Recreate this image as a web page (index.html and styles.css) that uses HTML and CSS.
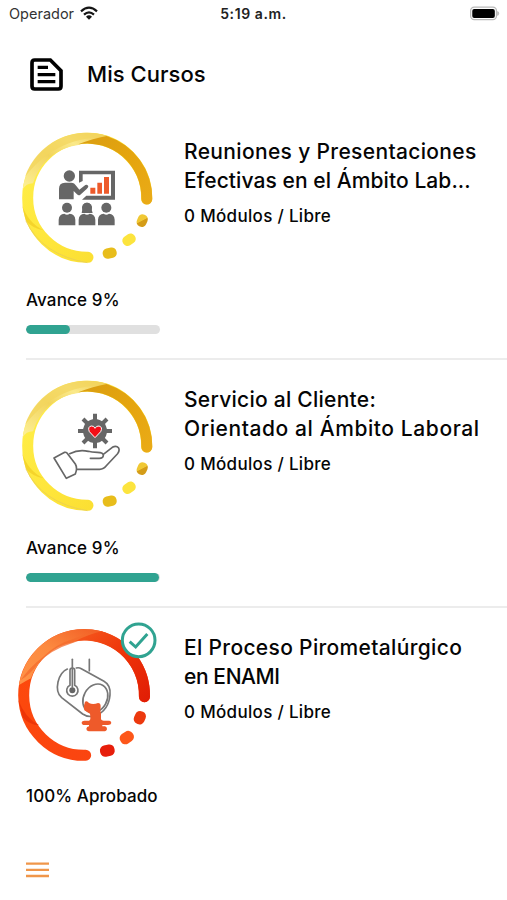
FILE: index.html
```html
<!DOCTYPE html>
<html lang="es">
<head>
<meta charset="utf-8">
<meta name="viewport" content="width=device-width, initial-scale=1">
<title>Mis Cursos</title>
<link rel="stylesheet" href="styles.css">
</head>
<body>
<svg class="defs" width="0" height="0" aria-hidden="true">
  <defs>
    <linearGradient id="gold" x1="0" y1="0" x2="1" y2="1"><stop offset="0" stop-color="#d99d12"/><stop offset=".5" stop-color="#e5a50e"/><stop offset="1" stop-color="#eaab18"/></linearGradient>
    <linearGradient id="pale" x1="0" y1="1" x2="1" y2="0"><stop offset="0" stop-color="#fdf19b"/><stop offset=".45" stop-color="#f2d45c"/><stop offset=".7" stop-color="#fae98a"/><stop offset="1" stop-color="#edc545"/></linearGradient>
    <linearGradient id="sun" x1="0" y1="0" x2="1" y2="1"><stop offset="0" stop-color="#fff04b"/><stop offset=".55" stop-color="#fee53a"/><stop offset="1" stop-color="#f8da2c"/></linearGradient>
    <linearGradient id="red" x1="0" y1="0" x2="1" y2="1"><stop offset="0" stop-color="#f65a1e"/><stop offset=".5" stop-color="#ed3208"/><stop offset="1" stop-color="#e01c05"/></linearGradient>
    <linearGradient id="orange" x1="0" y1="1" x2="1" y2="0"><stop offset="0" stop-color="#ff9347"/><stop offset=".5" stop-color="#fc8a40"/><stop offset="1" stop-color="#f15a22"/></linearGradient>
    <linearGradient id="fire" x1="0" y1="0" x2="1" y2="1"><stop offset="0" stop-color="#fd4a0b"/><stop offset="1" stop-color="#fa4312"/></linearGradient>
    <linearGradient id="dotGold" x1="0" y1="0" x2="1" y2="1"><stop offset=".48" stop-color="#f0c834"/><stop offset=".52" stop-color="#d49c18"/></linearGradient>
    <g id="ring-yellow">
      <path d="M410 237A178.500 178.500 0 1 0 234 412" fill="none" stroke="url(#sun)" stroke-width="33" stroke-linecap="round"/>
      <path d="M38 208A196 196 0 0 1 300 51Q250 60 205 75A162 162 0 0 0 69 190Q48 190 38 208Z" fill="url(#pale)"/>
      <path d="M45 170Q105 92 190 65Q235 50 300 51A196 196 0 0 0 45 170Z" fill="#f3d65f" opacity=".75"/>
      <path d="M205 73Q250 55 290 48A196 196 0 0 1 427 237A16.500 16.500 0 0 1 394 237A162 162 0 0 0 205 73Z" fill="url(#gold)"/>
      <path d="M36 255Q55 310 101 331Q68 325 47 302Z" fill="#f2cd24" opacity=".75"/>
      <path d="M48 303Q95 404 232 428" fill="none" stroke="#e9cf55" stroke-width="2.500"/>
      <rect x="382" y="283" width="30" height="38" rx="14" transform="rotate(24 397 301)" fill="url(#dotGold)"/>
      <rect x="337" y="344" width="41" height="31" rx="14" transform="rotate(-34 357 360)" fill="#fce43e"/>
      <rect x="278" y="384" width="42" height="31" rx="14" transform="rotate(-12 299 399)" fill="#e8bd1b"/>
    </g>
    <g id="attendee"><circle cx="0" cy="0" r="15"/><path d="M-25 53V36Q-24 19-8 18Q0 24 8 18Q24 19 25 36V53Z"/></g>
  </defs>
</svg>

<div class="status">
  <div class="carrier"><span>Operador</span>
    <svg class="wifi" viewBox="0 0 54 42"><path d="M3 16Q27-6 51 16M12 26Q27 12 42 26" fill="none" stroke="#151515" stroke-width="6.500"/><path d="M18 32Q27 24 36 32L27 41Z" fill="#151515"/></svg>
  </div>
  <time>5:19 a.m.</time>
  <svg class="battery" viewBox="0 0 93 44"><rect x="2" y="2" width="80" height="39" rx="11" fill="#fff" stroke="#b9b9b9" stroke-width="4"/><rect x="7" y="8" width="70" height="28" rx="6" fill="#000"/><path d="M86 16q6 5 0 12z" fill="#b9b9b9" stroke="#b9b9b9" stroke-width="3"/></svg>
</div>

<header class="header">
  <svg class="doc" viewBox="0 0 99 99"><path d="M14 6H61L93 38V85Q93 93 85 93H14Q6 93 6 85V14Q6 6 14 6Z" fill="none" stroke="#000" stroke-width="11"/><path d="M23 28H54M23 50H76M23 71H76" stroke="#000" stroke-width="10"/></svg>
  <h1>Mis Cursos</h1>
</header>

<main>
  <article class="course">
    <div class="top">
      <svg class="badge" viewBox="0 0 480 450">
        <use href="#ring-yellow"/>
        <g fill="#666">
          <circle cx="178" cy="168" r="17"/>
          <path d="M147 238V206Q147 188 165 188H184Q193 188 199 198L208 209L226 195Q233 192 235 199Q235 203 230 207L211 224Q206 228 201 223L191 213V238Z"/>
          <path d="M207 188V152H315V239H216L229 227H303V163H218V183Z"/>
          <use href="#attendee" x="171" y="263"/><use href="#attendee" x="231" y="263"/><use href="#attendee" x="289" y="263"/>
          <path d="M215 279Q218 265 218 258Q222 248 231 248Q241 248 245 260Q244 270 248 279Z"/>
        </g>
        <path d="M241 203h15v18h-15zM262 188h14v33h-14zM282 171h15v50h-15z" fill="#ed5a2b"/>
      </svg>
      <div class="info">
        <h2><span class="t1">Reuniones y Presentaciones</span><span class="t2">Efectivas en el Ámbito Lab...</span></h2>
        <p class="meta">0 Módulos / Libre</p>
      </div>
    </div>
    <p class="progress-label">Avance 9%</p>
    <div class="track"><div class="fill" style="width:33%"></div></div>
  </article>

  <article class="course">
    <div class="top">
      <svg class="badge" viewBox="0 0 480 450">
        <use href="#ring-yellow"/>
        <g transform="translate(0 6)">
          <g stroke="#666" stroke-width="12"><path d="M255 131V235M204 183H306M219 147L291 219M219 219L291 147"/></g>
          <circle cx="255" cy="183" r="36" fill="#666"/>
          <path d="M255 203L238 185Q232 170 244 168Q252 167 255 175Q259 167 267 168Q279 171 272 185Z" fill="#f20d16" stroke="#fff" stroke-width="3"/>
          <g fill="#fff" stroke="#666" stroke-width="5" stroke-linejoin="round" stroke-linecap="round">
            <path d="M179 251Q207 237 235 244Q244 247 262 247Q280 247 280 256Q279 265 268 265H241M280 253L307 232Q319 225 326 234Q330 242 322 252L291 285Q281 298 269 298H201" fill="none"/>
            <path d="M132 264L164 247Q168 246 171 249L196 282Q203 294 196 312L169 325Z"/>
          </g>
        </g>
      </svg>
      <div class="info">
        <h2><span class="t3">Servicio al Cliente:</span><span class="t4">Orientado al Ámbito Laboral</span></h2>
        <p class="meta">0 Módulos / Libre</p>
      </div>
    </div>
    <p class="progress-label">Avance 9%</p>
    <div class="track"><div class="fill" style="width:99.5%"></div></div>
  </article>

  <article class="course">
    <div class="top">
      <svg class="badge" viewBox="0 0 480 450">
        <g transform="translate(0 -3)">
          <path d="M403 245A181 181 0 1 0 227 421" fill="none" stroke="url(#fire)" stroke-width="33" stroke-linecap="round"/>
          <path d="M27 210A198 198 0 0 1 290 54Q240 56 190 82A164 164 0 0 0 63 190Q35 205 27 210Z" fill="url(#orange)"/>
          <path d="M100 125Q140 86 190 72Q240 48 290 56L285 73Q240 65 190 83Q120 105 85 145Q60 180 32 195Q60 155 100 125Z" fill="#f46b2c" opacity=".75"/>
          <path d="M195 79Q235 58 275 49A198 198 0 0 1 420 245A16.500 16.500 0 0 1 387 245A164 164 0 0 0 195 79Z" fill="url(#red)"/>
          <path d="M25 255Q45 310 88 331Q58 330 38 307Z" fill="#e93108" opacity=".8"/>
          <rect x="373" y="288" width="33" height="40" rx="15" transform="rotate(24 389 308)" fill="#ec390e"/>
          <rect x="329" y="351" width="43" height="34" rx="15" transform="rotate(-34 350 368)" fill="#fd571a"/>
          <rect x="270" y="390" width="44" height="34" rx="15" transform="rotate(-12 291 407)" fill="#e71e0b"/>
          <g fill="none" stroke="#777" stroke-width="5" stroke-linecap="round" stroke-linejoin="round">
            <path d="M238 133V167M199 159Q207 157 214 161L282 199Q303 211 300 240Q296 286 257 302Q235 309 218 297L155 248Q137 233 144 201Q151 171 172 162"/>
            <ellipse cx="256" cy="250" rx="35" ry="45" transform="rotate(29 256 250)"/>
            <path d="M180 211V166Q180 159 187 159Q194 159 194 166V211A17 17 0 1 1 180 211Z" fill="#fff"/>
            <path d="M187 133V216"/>
          </g>
          <circle cx="187" cy="226" r="9" fill="#666"/>
          <path d="M225 260Q232 257 237 264Q249 270 264 264Q273 264 272 277Q269 286 273 297V313Q275 317 281 317H298Q304 318 304 324Q303 330 294 330H277V334H285Q291 336 291 342Q290 349 281 349H236Q229 348 229 341Q230 335 237 334V330H220Q214 328 215 322Q216 317 223 317H237Q242 316 241 306L240 296L223 286Q220 270 225 260Z" fill="#ee5a2a"/>
          <circle cx="386" cy="76" r="49" fill="#fff" stroke="#30a391" stroke-width="9"/>
          <path d="M359 80L377 96L412 57" fill="none" stroke="#30a391" stroke-width="9"/>
        </g>
      </svg>
      <div class="info">
        <h2><span class="t5">El Proceso Pirometalúrgico</span><span class="t6">en ENAMI</span></h2>
        <p class="meta">0 Módulos / Libre</p>
      </div>
    </div>
    <p class="progress-label approved">100% Aprobado</p>
  </article>
</main>
<nav aria-label="Menú"><svg class="menu" viewBox="0 0 23 16"><path d="M0 1.600H23M0 7.800H23M0 14H23" stroke="#f0964a" stroke-width="2.300"/></svg></nav>
</body>
</html>
```

FILE: styles.css
```css
* { box-sizing: border-box; }
body {
  margin: 0;
  width: 507px;
  height: 900px;
  overflow: hidden;
  background: #fff;
  color: #050505;
  font-family: Inter, "Liberation Sans", sans-serif;
  font-weight: 500;
}
h1, h2, p { margin: 0; font-weight: 500; }
svg { display: block; flex: none; }
.defs { position: absolute; }
.status {
  display: grid;
  grid-template-columns: 1fr auto 1fr;
  align-items: center;
  height: 28px;
  padding: 0 7px 2px 9px;
}
.carrier { display: flex; align-items: center; gap: 6px; font-size: 14.5px; font-weight: 400; color: #333; }
.wifi { width: 18px; height: 14px; }
.status time { margin-right: 2px; font-size: 14px; font-weight: 600; letter-spacing: .6px; color: #222; }
.battery { width: 30px; height: 15px; justify-self: end; }
.header { display: flex; align-items: center; height: 92px; padding: 0 0 0 30px; gap: 24px; }
.doc { width: 33px; height: 33px; }
.header h1 { font-size: 22px; letter-spacing: .05px; }
.course { height: 248px; padding-left: 26px; }
.top { display: flex; height: 160px; margin-left: -16px; }
.badge { width: 160px; height: 150px; }
.info { padding: 17px 0 0 14px; }
.info h2 { font-size: 21px; line-height: 29px; }
.info h2 span { display: block; white-space: nowrap; }
.t1 { letter-spacing: .34px; }
.t2 { letter-spacing: .08px; }
.t3 { letter-spacing: .26px; }
.t4 { letter-spacing: .59px; }
.t5 { letter-spacing: .33px; }
.t6 { letter-spacing: -.4px; }
.meta { margin-top: 9px; font-size: 17px; line-height: 24px; letter-spacing: .32px; white-space: nowrap; }
.progress-label { height: 40px; padding-top: 8px; font-size: 17px; line-height: 24px; letter-spacing: .15px; }
.progress-label.approved { letter-spacing: .08px; }
.track { width: 134px; height: 9px; margin-top: 5px; border-radius: 5px; background: #e0e0e0; overflow: hidden; }
.fill { height: 100%; border-radius: 5px; background: #30a391; }
.course:not(:last-child)::after { content: ""; display: block; height: 2px; margin-top: 24px; background: #ececec; }
.menu { width: 23px; height: 16px; margin: -2px 0 0 26px; }
```
